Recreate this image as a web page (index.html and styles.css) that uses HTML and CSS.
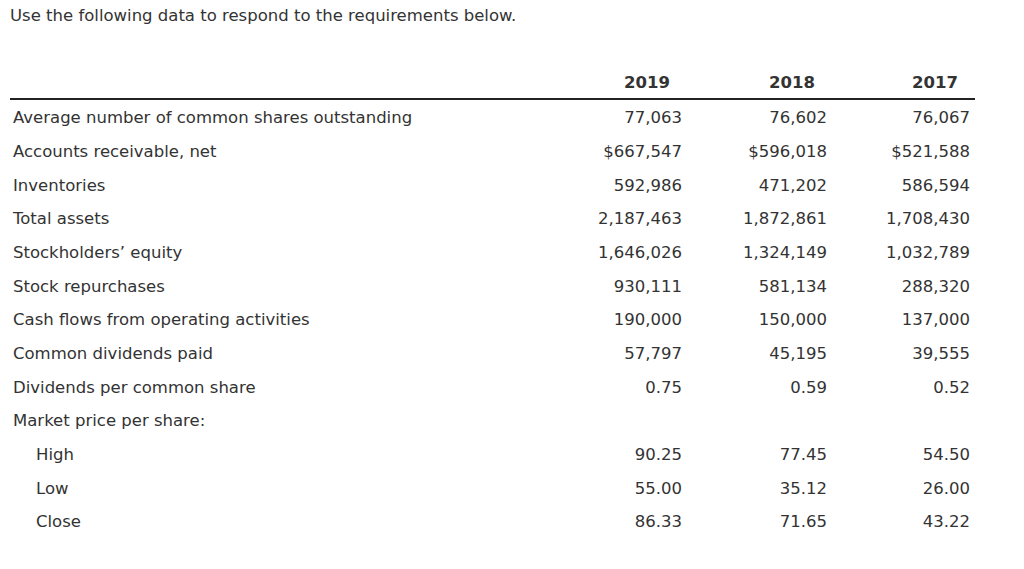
FILE: index.html
```html
<!DOCTYPE html>
<html lang="en">
<head>
<meta charset="utf-8">
<title>Financial data</title>
<link rel="stylesheet" href="styles.css">
</head>
<body>
<div class="page">
  <p class="intro">Use the following data to respond to the requirements below.</p>
  <div class="data">
    <div class="cell head label"></div>
    <div class="cell head">2019</div>
    <div class="cell head">2018</div>
    <div class="cell head">2017</div>

    <div class="cell label">Average number of common shares outstanding</div>
    <div class="cell num">77,063</div>
    <div class="cell num">76,602</div>
    <div class="cell num">76,067</div>

    <div class="cell label">Accounts receivable, net</div>
    <div class="cell num">$667,547</div>
    <div class="cell num">$596,018</div>
    <div class="cell num">$521,588</div>

    <div class="cell label">Inventories</div>
    <div class="cell num">592,986</div>
    <div class="cell num">471,202</div>
    <div class="cell num">586,594</div>

    <div class="cell label">Total assets</div>
    <div class="cell num">2,187,463</div>
    <div class="cell num">1,872,861</div>
    <div class="cell num">1,708,430</div>

    <div class="cell label">Stockholders’ equity</div>
    <div class="cell num">1,646,026</div>
    <div class="cell num">1,324,149</div>
    <div class="cell num">1,032,789</div>

    <div class="cell label">Stock repurchases</div>
    <div class="cell num">930,111</div>
    <div class="cell num">581,134</div>
    <div class="cell num">288,320</div>

    <div class="cell label">Cash flows from operating activities</div>
    <div class="cell num">190,000</div>
    <div class="cell num">150,000</div>
    <div class="cell num">137,000</div>

    <div class="cell label">Common dividends paid</div>
    <div class="cell num">57,797</div>
    <div class="cell num">45,195</div>
    <div class="cell num">39,555</div>

    <div class="cell label">Dividends per common share</div>
    <div class="cell num">0.75</div>
    <div class="cell num">0.59</div>
    <div class="cell num">0.52</div>

    <div class="cell label">Market price per share:</div>
    <div class="cell num"></div>
    <div class="cell num"></div>
    <div class="cell num"></div>

    <div class="cell label sub">High</div>
    <div class="cell num">90.25</div>
    <div class="cell num">77.45</div>
    <div class="cell num">54.50</div>

    <div class="cell label sub">Low</div>
    <div class="cell num">55.00</div>
    <div class="cell num">35.12</div>
    <div class="cell num">26.00</div>

    <div class="cell label sub">Close</div>
    <div class="cell num">86.33</div>
    <div class="cell num">71.65</div>
    <div class="cell num">43.22</div>
  </div>
</div>
</body>
</html>
```

FILE: styles.css
```css
html, body {
  margin: 0;
  padding: 0;
  background: #ffffff;
}

body {
  font-family: "DejaVu Sans", Verdana, sans-serif;
  font-size: 16.5px;
  color: #333333;
}

.page {
  padding: 0 49px 0 10px;
}

.intro {
  margin: 0;
  line-height: 32px;
  height: 32px;
}

.data {
  margin-top: 34px;
  display: grid;
  grid-template-columns: 530px 147px 145px 143px;
  grid-auto-rows: 33.67px;
}

.cell {
  display: flex;
  align-items: center;
  white-space: nowrap;
  padding-top: 3px;
  box-sizing: border-box;
}

.head {
  height: 34px;
  font-weight: bold;
  justify-content: flex-end;
  padding-right: 17px;
  padding-top: 0;
  border-bottom: 2px solid #222222;
}

.head.label {
  padding-right: 0;
}

.label {
  padding-left: 3px;
}

.label.sub {
  padding-left: 26px;
}

.num {
  justify-content: flex-end;
  padding-right: 5px;
}
```
